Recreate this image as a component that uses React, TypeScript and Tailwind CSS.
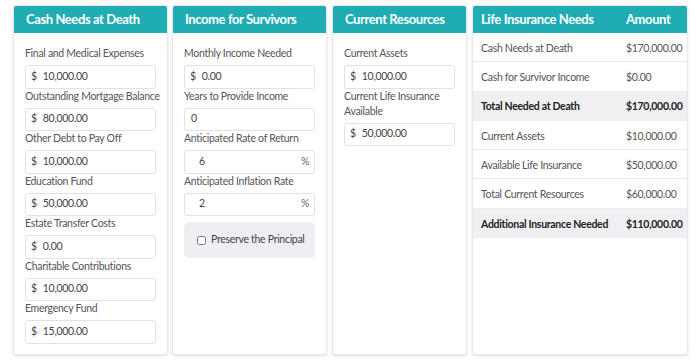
import { useState } from 'react'

const font = { fontFamily: 'Lato, "Noto Sans", sans-serif' }

type Field = { label: string; value: string; prefix?: string; suffix?: string; indent?: boolean; wrap?: boolean }

const cashFields: Field[] = [
  { label: 'Final and Medical Expenses', value: '10,000.00', prefix: '$' },
  { label: 'Outstanding Mortgage Balance', value: '80,000.00', prefix: '$' },
  { label: 'Other Debt to Pay Off', value: '10,000.00', prefix: '$' },
  { label: 'Education Fund', value: '50,000.00', prefix: '$' },
  { label: 'Estate Transfer Costs', value: '0.00', prefix: '$' },
  { label: 'Charitable Contributions', value: '10,000.00', prefix: '$' },
  { label: 'Emergency Fund', value: '15,000.00', prefix: '$' },
]

const incomeFields: Field[] = [
  { label: 'Monthly Income Needed', value: '0.00', prefix: '$' },
  { label: 'Years to Provide Income', value: '0' },
  { label: 'Anticipated Rate of Return', value: '6', suffix: '%', indent: true },
  { label: 'Anticipated Inflation Rate', value: '2', suffix: '%', indent: true },
]

const resourceFields: Field[] = [
  { label: 'Current Assets', value: '10,000.00', prefix: '$' },
  { label: 'Current Life Insurance Available', value: '50,000.00', prefix: '$', wrap: true },
]

const rows = [
  { label: 'Cash Needs at Death', amount: '$170,000.00' },
  { label: 'Cash for Survivor Income', amount: '$0.00' },
  { label: 'Total Needed at Death', amount: '$170,000.00', total: true },
  { label: 'Current Assets', amount: '$10,000.00' },
  { label: 'Available Life Insurance', amount: '$50,000.00' },
  { label: 'Total Current Resources', amount: '$60,000.00' },
  { label: 'Additional Insurance Needed', amount: '$110,000.00', total: true },
]

function Header({ title }: { title: string }) {
  return (
    <div className="flex h-[27px] items-center whitespace-nowrap bg-[#20acb3] px-[12px] text-[13px] font-bold tracking-[-0.4px] text-white">
      {title}
    </div>
  )
}

function InputField({ field }: { field: Field }) {
  return (
    <div>
      <div
        className={`mb-[4px] text-[10.5px] leading-[15px] tracking-[-0.3px] text-[#555] ${
          field.wrap ? '' : 'whitespace-nowrap'
        }`}
      >
        {field.label}
      </div>
      <div className="flex h-[23.5px] items-center rounded-[3px] border border-[#e2e2e6] bg-white text-[10.5px] tracking-[-0.3px] text-[#444]">
        {field.prefix && <span className="pl-[5px] pr-[6px]">{field.prefix}</span>}
        <span className={field.prefix ? '' : field.indent ? 'pl-[14px]' : 'pl-[6px]'}>{field.value}</span>
        {field.suffix && <span className="ml-auto pr-[5px] text-[#666]">{field.suffix}</span>}
      </div>
    </div>
  )
}

function Card({ title, width, children }: { title: string; width: string; children: React.ReactNode }) {
  return (
    <div className={`${width} overflow-hidden rounded-[3px] border border-[#e8e8ec] bg-white shadow-[0_1px_3px_rgba(0,0,0,0.12)]`}>
      <Header title={title} />
      <div className="flex flex-col px-[11px] pb-[11px] pt-[13px]">{children}</div>
    </div>
  )
}

export default function App() {
  const [preserve, setPreserve] = useState(false)

  return (
    <main className="h-[364px] w-[700px] bg-white" style={font}>
      <div className="flex items-start gap-[4px] pl-[13px] pt-[5px]">
        <Card title="Cash Needs at Death" width="w-[155px] h-[350px]">
          {cashFields.map((f) => (
            <InputField key={f.label} field={f} />
          ))}
        </Card>

        <Card title="Income for Survivors" width="w-[155px] h-[350px]">
          {incomeFields.map((f) => (
            <InputField key={f.label} field={f} />
          ))}
          <label className="mt-[6px] flex h-[36px] items-center whitespace-nowrap rounded-[5px] bg-[#efeef2] pl-[13px] text-[10.5px] tracking-[-0.3px] text-[#444]">
            <input
              type="checkbox"
              checked={preserve}
              onChange={(e) => setPreserve(e.target.checked)}
              className="mr-[5px] h-[9px] w-[9px] accent-[#20acb3]"
            />
            Preserve the Principal
          </label>
        </Card>

        <Card title="Current Resources" width="w-[135px] h-[350px] ml-[1px]">
          {resourceFields.map((f) => (
            <InputField key={f.label} field={f} />
          ))}
        </Card>

        <div className="ml-[1px] h-[350px] w-[216px] overflow-hidden rounded-[3px] border border-[#e8e8ec] bg-white shadow-[0_1px_3px_rgba(0,0,0,0.12)]">
          <div className="flex h-[27px] items-center whitespace-nowrap bg-[#20acb3] text-[13px] font-bold tracking-[-0.4px] text-white">
            <div className="w-[146px] pl-[8px]">Life Insurance Needs</div>
            <div className="pl-[7px]">Amount</div>
          </div>
          {rows.map((r) => (
            <div
              key={r.label}
              className={`flex h-[29.3px] items-center whitespace-nowrap border-b border-[#ededf0] pt-[3px] text-[10.5px] tracking-[-0.3px] ${
                r.total ? 'bg-[#f0eff2] font-bold text-[#222]' : 'text-[#555]'
              }`}
            >
              <div className="w-[146px] pl-[8px]">{r.label}</div>
              <div className="pl-[7px]">{r.amount}</div>
            </div>
          ))}
        </div>
      </div>
    </main>
  )
}
